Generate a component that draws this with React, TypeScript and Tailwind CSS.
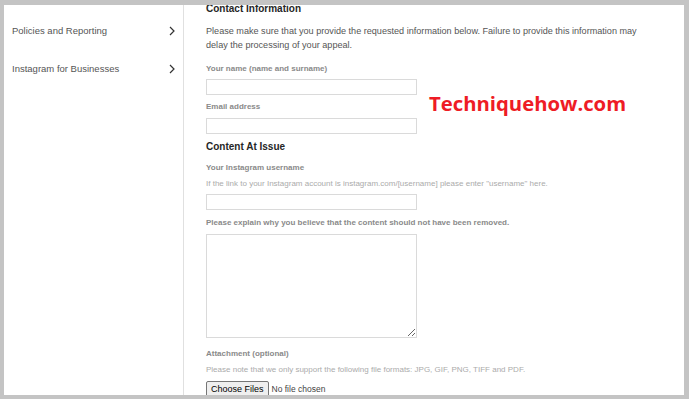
const SIDE_LINKS = ["Policies and Reporting", "Instagram for Businesses"];

function Chevron() {
  return (
    <svg width="6" height="10" viewBox="0 0 6 10" fill="none" className="shrink-0">
      <polyline points="1,1 5,5 1,9" stroke="#333" strokeWidth="1.2" />
    </svg>
  );
}

function Field({ className = "" }: { className?: string }) {
  return (
    <input
      type="text"
      className={`block w-[211px] h-[16px] border border-[#dadada] bg-white outline-none ${className}`}
    />
  );
}

export default function App() {
  return (
    <div className="w-[689px] h-[399px] bg-[#c4c4c4] pt-[5px] pl-[4px] pr-[5px] pb-[4px] overflow-hidden font-['Liberation_Sans',Arial,sans-serif]">
      <div className="relative flex h-full bg-white overflow-hidden">
        <aside className="w-[180px] shrink-0 border-r border-[#e0e0e0] pt-[7px]">
          {SIDE_LINKS.map((label) => (
            <div key={label} className="flex h-[38px] items-center justify-between pl-[8px] pr-[8px]">
              <span className="text-[9.5px] text-[#555]">{label}</span>
              <Chevron />
            </div>
          ))}
        </aside>

        <main className="flex-1 pl-[22px] pr-[30px]">
          <h2 className="-mt-[3px] text-[10px] leading-[14px] font-bold text-[#262626]">Contact Information</h2>
          <p className="mt-[8px] w-[445px] text-[9.1px] leading-[14px] text-[#555]">
            Please make sure that you provide the requested information below. Failure to provide this information may
            delay the processing of your appeal.
          </p>

          <label className="mt-[11px] block text-[8px] leading-[12px] font-bold text-[#8a8a8a]">
            Your name (name and surname)
          </label>
          <Field className="mt-[4px]" />

          <label className="mt-[6px] block text-[8px] leading-[12px] font-bold text-[#8a8a8a]">Email address</label>
          <Field className="mt-[5px]" />

          <h2 className="mt-[6px] text-[10px] leading-[14px] font-bold text-[#262626]">Content At Issue</h2>

          <label className="mt-[8px] block text-[8px] leading-[12px] font-bold text-[#8a8a8a]">
            Your Instagram username
          </label>
          <p className="mt-[4px] text-[8px] leading-[12px] text-[#ababab]">
            If the link to your Instagram account is instagram.com/[username] please enter "username" here.
          </p>
          <Field className="mt-[4px]" />

          <label className="mt-[7px] block text-[8px] leading-[12px] font-bold text-[#8a8a8a]">
            Please explain why you believe that the content should not have been removed.
          </label>
          <textarea className="mt-[5px] block w-[211px] h-[104px] border border-[#dadada] outline-none" />

          <label className="mt-[10px] block text-[8px] leading-[12px] font-bold text-[#8a8a8a]">
            Attachment (optional)
          </label>
          <p className="mt-[4px] text-[8px] leading-[12px] text-[#ababab]">
            Please note that we only support the following file formats: JPG, GIF, PNG, TIFF and PDF.
          </p>
          <div className="mt-[5px] flex items-center gap-[3px]">
            <button className="h-[16px] px-[4px] border border-[#767676] rounded-[2px] bg-[#efefef] text-[9px] leading-none text-black">
              Choose Files
            </button>
            <span className="text-[8.5px] text-[#444]">No file chosen</span>
          </div>
        </main>

        <div className="absolute left-[425px] top-[84px] font-['Open_Sans',sans-serif] font-bold text-[20.3px] leading-[28px] text-[#ee1c25]">
          Techniquehow.com
        </div>
      </div>
    </div>
  );
}
